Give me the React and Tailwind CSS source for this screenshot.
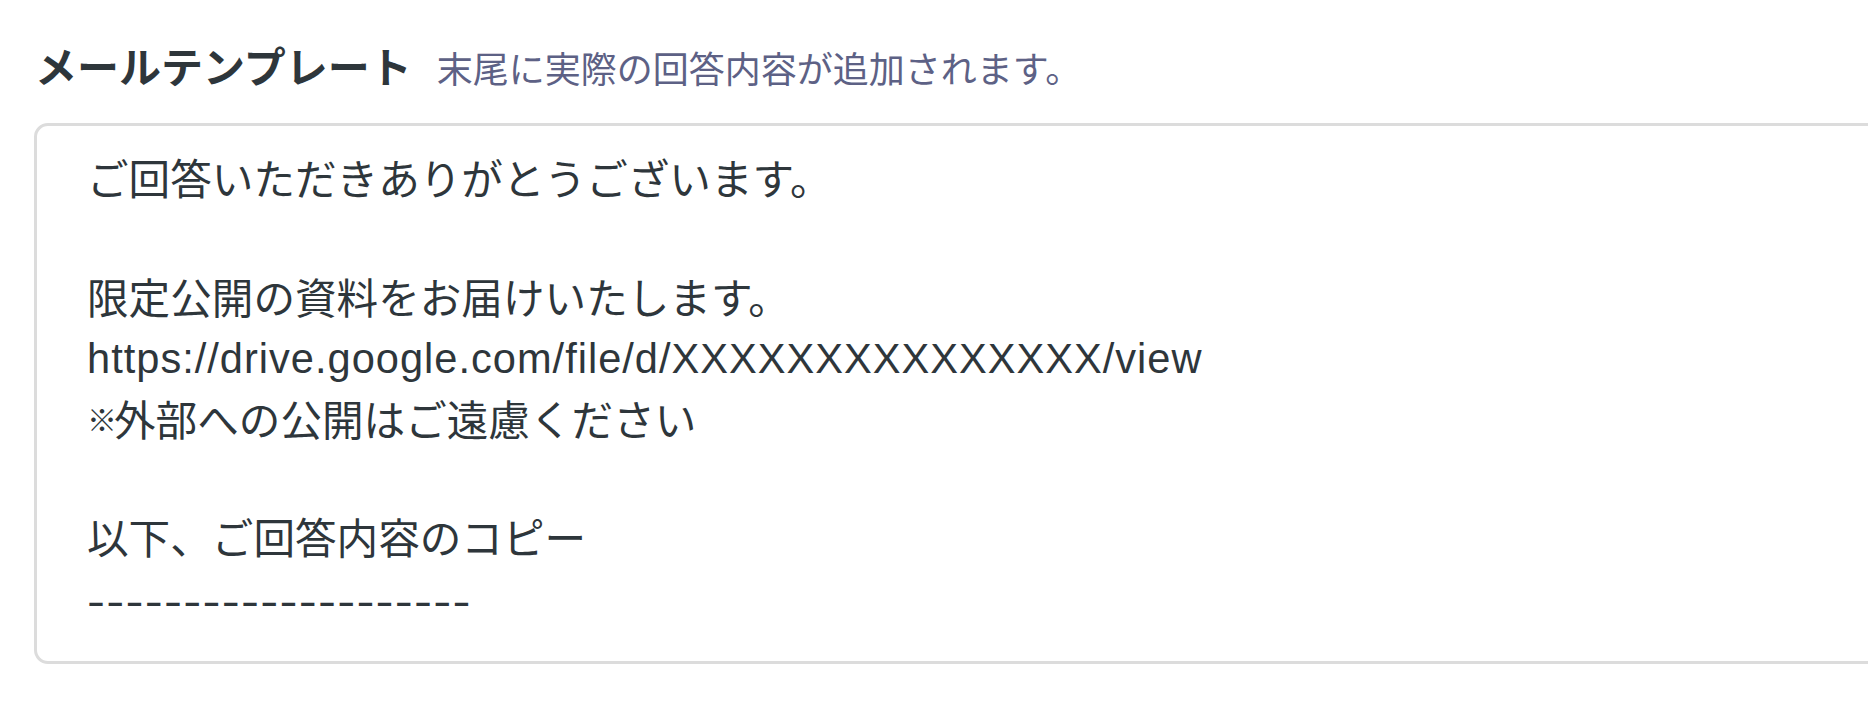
export default function App() {
  return (
    <div className="w-[1868px] h-[704px] overflow-hidden bg-white pl-[34px] pt-[39px] font-['Liberation_Sans','Noto_Sans_CJK_JP',sans-serif]">
      <div className="flex items-baseline gap-[25px] leading-[60px]">
        <h2 className="text-[42px] font-bold text-[#2e363b] ml-[1px]">メールテンプレート</h2>
        <span className="text-[36px] text-[#5d6185]">末尾に実際の回答内容が追加されます。</span>
      </div>
      <div className="mt-[22px] box-border w-[1900px] h-[541px] border-[3px] border-[#dcdcdc] rounded-[14px] pl-[50px] pt-[25px] text-[41.6px] leading-[59.4px] text-[#2e363b] whitespace-pre">
        <div>ご回答いただきありがとうございます。</div>
        <div className="h-[59.4px]"></div>
        <div>限定公開の資料をお届けいたします。</div>
        <div className="tracking-[1px]">https://drive.google.com/file/d/XXXXXXXXXXXXXXX/view</div>
        <div>
          <span className="text-[30px] font-bold tracking-[-3px] align-[5px] font-['Noto_Sans_CJK_JP',sans-serif]">※</span>外部への公開はご遠慮ください
        </div>
        <div className="h-[59.4px]"></div>
        <div>以下、ご回答内容のコピー</div>
        <div className="pt-[2px]">
          <span className="inline-block origin-left scale-x-[1.3] tracking-[0.95px] font-medium">--------------------</span>
        </div>
      </div>
    </div>
  );
}
